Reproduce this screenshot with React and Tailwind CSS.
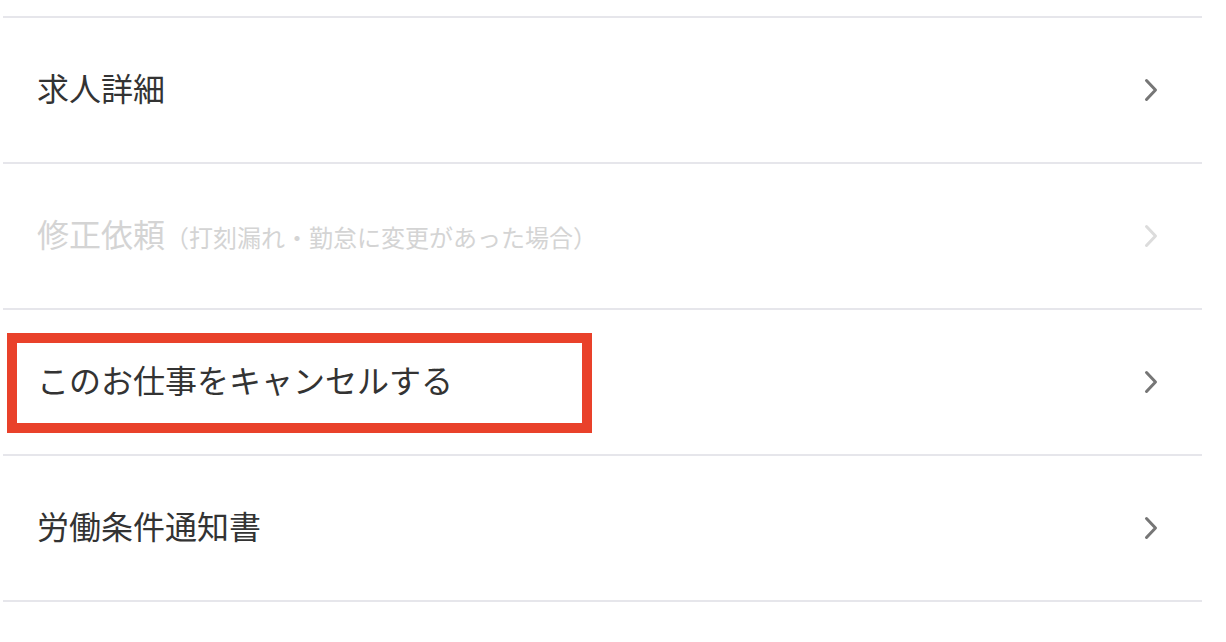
import React from "react";

const rows = [
  { label: "求人詳細" },
  { label: "修正依頼", note: "（打刻漏れ・勤怠に変更があった場合）", disabled: true },
  { label: "このお仕事をキャンセルする", marked: true },
  { label: "労働条件通知書" },
];

const Chevron = ({ disabled }) => (
  <svg
    width="14"
    height="24"
    viewBox="0 0 14 24"
    fill="none"
    className={disabled ? "text-[#dcdcdc]" : "text-[#767676]"}
  >
    <path
      d="M2.5 2.5 L11.5 12 L2.5 21.5"
      stroke="currentColor"
      strokeWidth="3"
      strokeLinecap="round"
      strokeLinejoin="round"
    />
  </svg>
);

const App = () => {
  return (
    <div
      className="w-[1226px] h-[642px] bg-white overflow-hidden pt-4"
      style={{ fontFamily: '"Hiragino Sans", "Noto Sans CJK JP", sans-serif' }}
    >
      <ul className="ml-[3px] w-[1199px] border-t-2 border-[#e6e6eb]">
        {rows.map((row) => (
          <li
            key={row.label}
            className="relative h-[146px] border-b-2 border-[#e6e6eb] flex items-center justify-between pl-[34px] pr-[44px]"
          >
            <div className="flex items-baseline mb-[6px]">
              <span
                className={
                  "text-[32px] leading-none " +
                  (row.disabled ? "text-[#d4d4d4]" : "text-[#333333]")
                }
              >
                {row.label}
              </span>
              {row.note && (
                <span className="text-[24px] leading-none text-[#d4d4d4]">
                  {row.note}
                </span>
              )}
            </div>
            <Chevron disabled={row.disabled} />
            {/* annotation */}
            {row.marked && (
              <div className="absolute left-[4px] top-[23px] w-[585px] h-[100px] border-[10px] border-[#e9412a] pointer-events-none" />
            )}
          </li>
        ))}
      </ul>
    </div>
  );
};

export default App;
